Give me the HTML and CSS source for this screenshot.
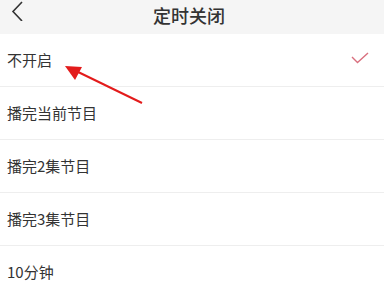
FILE: index.html
```html
<!DOCTYPE html>
<html lang="zh-CN">
<head>
    <meta charset="utf-8">
    <link rel="stylesheet" href="styles.css">
</head>
<body>
    <div class="header">
        <a href="#" class="back">
            <svg width="14" height="20" viewBox="0 0 14 20">
                <path d="M12 1 L3 10.5 L12 20" fill="none" stroke="#333" stroke-width="1.6"/>
            </svg>
        </a>
        <h1>定时关闭</h1>
    </div>
    <ul class="options">
        <li class="selected">
            <span>不开启</span>
            <svg class="check" width="18" height="12" viewBox="0 0 18 12">
                <path d="M1 5 L6.5 10.5 L17 1" fill="none" stroke="#d9707f" stroke-width="1.4"/>
            </svg>
        </li>
        <li><span>播完当前节目</span></li>
        <li><span>播完2集节目</span></li>
        <li><span>播完3集节目</span></li>
        <li><span>10分钟</span></li>
    </ul>
    <!-- annotation arrow -->
    <svg class="pointer" width="384" height="283" viewBox="0 0 384 283">
        <line x1="142" y1="103" x2="74" y2="70" stroke="#e31b1b" stroke-width="2"/>
        <polygon points="65,66 82,67 75,80" fill="#e31b1b"/>
    </svg>
</body>
</html>
```

FILE: styles.css
```css
body {
    margin: 0;
    font-family: "Noto Sans CJK SC", "Noto Sans", sans-serif;
    background-color: #fff;
    color: #333;
    width: 384px;
    height: 283px;
    overflow: hidden;
    position: relative;
}
.header {
    height: 34px;
    background-color: #f5f5f5;
    display: flex;
    align-items: center;
    justify-content: center;
    position: relative;
}
.header h1 {
    margin: 0 0 4px -6px;
    font-size: 18px;
    font-weight: 500;
    color: #333;
}
.back {
    position: absolute;
    left: 10px;
    top: 1px;
    display: block;
}
.options {
    list-style-type: none;
    margin: 0;
    padding: 0;
}
.options li {
    height: 52px;
    border-bottom: 1px solid #eeeeee;
    display: flex;
    align-items: center;
    justify-content: space-between;
    padding: 0 15px 0 7px;
    font-size: 15px;
    color: #333;
}
.options li span {
    margin-bottom: 2px;
}
.check {
    margin-bottom: 4px;
}
.pointer {
    position: absolute;
    left: 0;
    top: 0;
}
```
